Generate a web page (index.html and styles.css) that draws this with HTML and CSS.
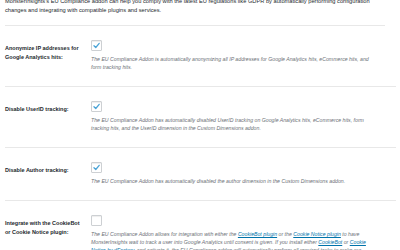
FILE: index.html
```html
<!DOCTYPE html>
<html>
<head>
<meta charset="utf-8">
<link rel="stylesheet" href="styles.css">
</head>
<body>
<div class="wrap">
  <p class="intro">MonsterInsights's EU Compliance addon can help you comply with the latest EU regulations like GDPR by automatically performing configuration changes and integrating with compatible plugins and services.</p>
  <div class="table">
    <div class="row">
      <div class="label">Anonymize IP addresses for Google Analytics hits:</div>
      <div class="field">
        <span class="cb checked"><svg viewBox="0 0 10 10"><path d="M2.2 5.2 L4.2 7.2 L8 2.6" /></svg></span>
        <p class="desc">The EU Compliance Addon is automatically anonymizing all IP addresses for Google Analytics hits, eCommerce hits, and form tracking hits.</p>
      </div>
    </div>
    <div class="row">
      <div class="label">Disable UserID tracking:</div>
      <div class="field">
        <span class="cb checked"><svg viewBox="0 0 10 10"><path d="M2.2 5.2 L4.2 7.2 L8 2.6" /></svg></span>
        <p class="desc">The EU Compliance Addon has automatically disabled UserID tracking on Google Analytics hits, eCommerce hits, form tracking hits, and the UserID dimension in the Custom Dimensions addon.</p>
      </div>
    </div>
    <div class="row">
      <div class="label">Disable Author tracking:</div>
      <div class="field">
        <span class="cb checked"><svg viewBox="0 0 10 10"><path d="M2.2 5.2 L4.2 7.2 L8 2.6" /></svg></span>
        <p class="desc">The EU Compliance Addon has automatically disabled the author dimension in the Custom Dimensions addon.</p>
      </div>
    </div>
    <div class="row">
      <div class="label">Integrate with the CookieBot or Cookie Notice plugin:</div>
      <div class="field">
        <span class="cb"></span>
        <p class="desc">The EU Compliance Addon allows for integration with either the <a href="#">CookieBot plugin</a> or the <a href="#">Cookie Notice plugin</a> to have MonsterInsights wait to track a user into Google Analytics until consent is given. If you install either <a href="#">CookieBot</a> or <a href="#">Cookie Notice by dFactory</a>, and activate it, the EU Compliance addon will automatically perform all required tasks to make our tracking code wait for consent before tracking users.</p>
      </div>
    </div>
  </div>
</div>
</body>
</html>
```

FILE: styles.css
```css
html, body {
  margin: 0;
  padding: 0;
  background: #ffffff;
}
body {
  font-family: "Liberation Sans", Arial, sans-serif;
  color: #23282d;
  overflow: hidden;
}
.wrap {
  padding: 0 4px 0 5px;
}
.intro {
  margin: -3px 0 0;
  font-size: 5.7px;
  line-height: 9px;
  width: 380px;
  padding-bottom: 10px;
  border-bottom: 1px solid #e8e8e8;
}
.row {
  display: grid;
  grid-template-columns: 86px 1fr;
  border-bottom: 1px solid #e8e8e8;
  padding: 14px 0 15px;
}
.label {
  font-weight: bold;
  font-size: 5.5px;
  line-height: 9px;
  padding-top: 4px;
  padding-right: 6px;
}
.field {
  display: flex;
  flex-direction: column;
  align-items: flex-start;
}
.cb {
  width: 9px;
  height: 9px;
  border: 1px solid #cdd0d3;
  border-radius: 1px;
  box-shadow: inset 0 1px 1px rgba(0,0,0,0.07);
  background: #fff;
  display: flex;
}
.cb svg {
  width: 9px;
  height: 9px;
}
.cb path {
  fill: none;
  stroke: #4aa3d6;
  stroke-width: 1.4;
  stroke-linecap: round;
  stroke-linejoin: round;
}
.desc {
  margin: 4px 0 0;
  font-style: italic;
  font-size: 5.2px;
  line-height: 8px;
  color: #6c7177;
  width: 286px;
}
.desc a {
  color: #0073aa;
}
```
